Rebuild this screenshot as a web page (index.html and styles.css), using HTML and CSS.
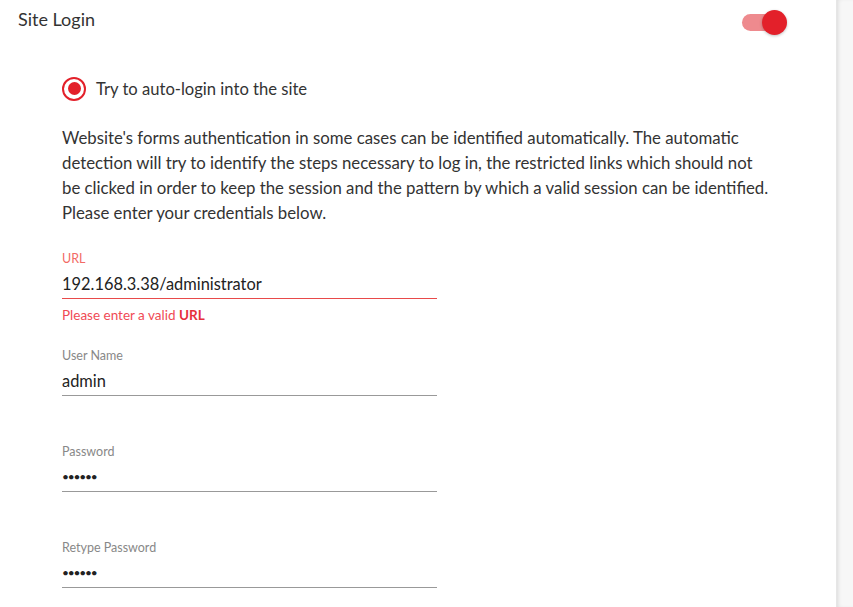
FILE: index.html
```html
<!DOCTYPE html>
<html>
<head>
<meta charset="utf-8">
<link rel="stylesheet" href="styles.css">
</head>
<body>
<div class="page">
  <main class="panel">
    <header class="head">
      <h1 class="title">Site Login</h1>
      <div class="toggle"><span class="track"></span><span class="knob"></span></div>
    </header>
    <section class="body">
      <label class="radio-row">
        <span class="radio"><span class="dot"></span></span>
        <span class="radio-text">Try to auto-login into the site</span>
      </label>
      <p class="desc">Website's forms authentication in some cases can be identified automatically. The automatic detection will try to identify the steps necessary to log in, the restricted links which should not be clicked in order to keep the session and the pattern by which a valid session can be identified. Please enter your credentials below.</p>
      <div class="field error">
        <div class="label">URL</div>
        <div class="value">192.168.3.38/administrator</div>
        <div class="msg">Please enter a valid <b>URL</b></div>
      </div>
      <div class="field">
        <div class="label">User Name</div>
        <div class="value">admin</div>
      </div>
      <div class="field">
        <div class="label">Password</div>
        <div class="value pw">••••••</div>
      </div>
      <div class="field">
        <div class="label">Retype Password</div>
        <div class="value pw">••••••</div>
      </div>
    </section>
  </main>
  <aside class="side"></aside>
</div>
</body>
</html>
```

FILE: styles.css
```css
html, body { margin: 0; padding: 0; height: 100%; overflow: hidden; }
body { font-family: Lato, "Open Sans", sans-serif; color: #333; background: #fff; }
.page { display: flex; height: 607px; }
.panel { width: 836px; flex: none; background: #fff; }
.side { flex: 1; background: #f7f7f7; box-shadow: inset 3px 0 4px -2px rgba(0,0,0,0.12); border-left: 1px solid #e6e6e6; }
.head { display: flex; align-items: flex-start; justify-content: space-between; padding: 0 49px 0 18px; height: 38px; }
.title { margin: 0; padding-top: 8px; font-size: 18px; line-height: 22px; font-weight: 400; color: #333; }
.toggle { position: relative; width: 45px; height: 25px; margin-top: 10px; }
.track { position: absolute; left: 0; top: 4px; width: 44px; height: 17px; border-radius: 9px; background: #ee8a8e; }
.knob { position: absolute; left: 20px; top: 0; width: 25px; height: 25px; border-radius: 50%; background: #e3202a; box-shadow: 0 1px 3px rgba(0,0,0,0.25); }
.body { padding: 38px 0 0 62px; }
.radio-row { display: flex; align-items: center; gap: 10px; height: 25px; }
.radio { width: 20px; height: 20px; border: 2.5px solid #e3202a; border-radius: 50%; display: flex; align-items: center; justify-content: center; }
.dot { width: 13px; height: 13px; border-radius: 50%; background: #e3202a; }
.radio-text { font-size: 16.6px; color: #333; }
.desc { margin: 24px 0 0; width: 710px; font-size: 16.8px; line-height: 25px; color: #333; }
.field { width: 375px; height: 96px; }
.field.error { height: 97px; }
.desc + .field { margin-top: 26px; }
.label { font-size: 12.5px; color: #888; height: 16px; line-height: 15px; }
.value { font-size: 16.4px; color: #222; height: 32px; line-height: 34px; border-bottom: 1px solid #999; box-sizing: border-box; }
.pw { font-size: 12px; letter-spacing: -1.2px; }
.error .label { color: #f26a65; }
.error .value { border-bottom-color: #e84a4a; }
.msg { margin-top: 7px; font-size: 13.5px; line-height: 18px; color: #f04a55; }
.msg b { font-weight: 700; color: #e6303c; }
```
